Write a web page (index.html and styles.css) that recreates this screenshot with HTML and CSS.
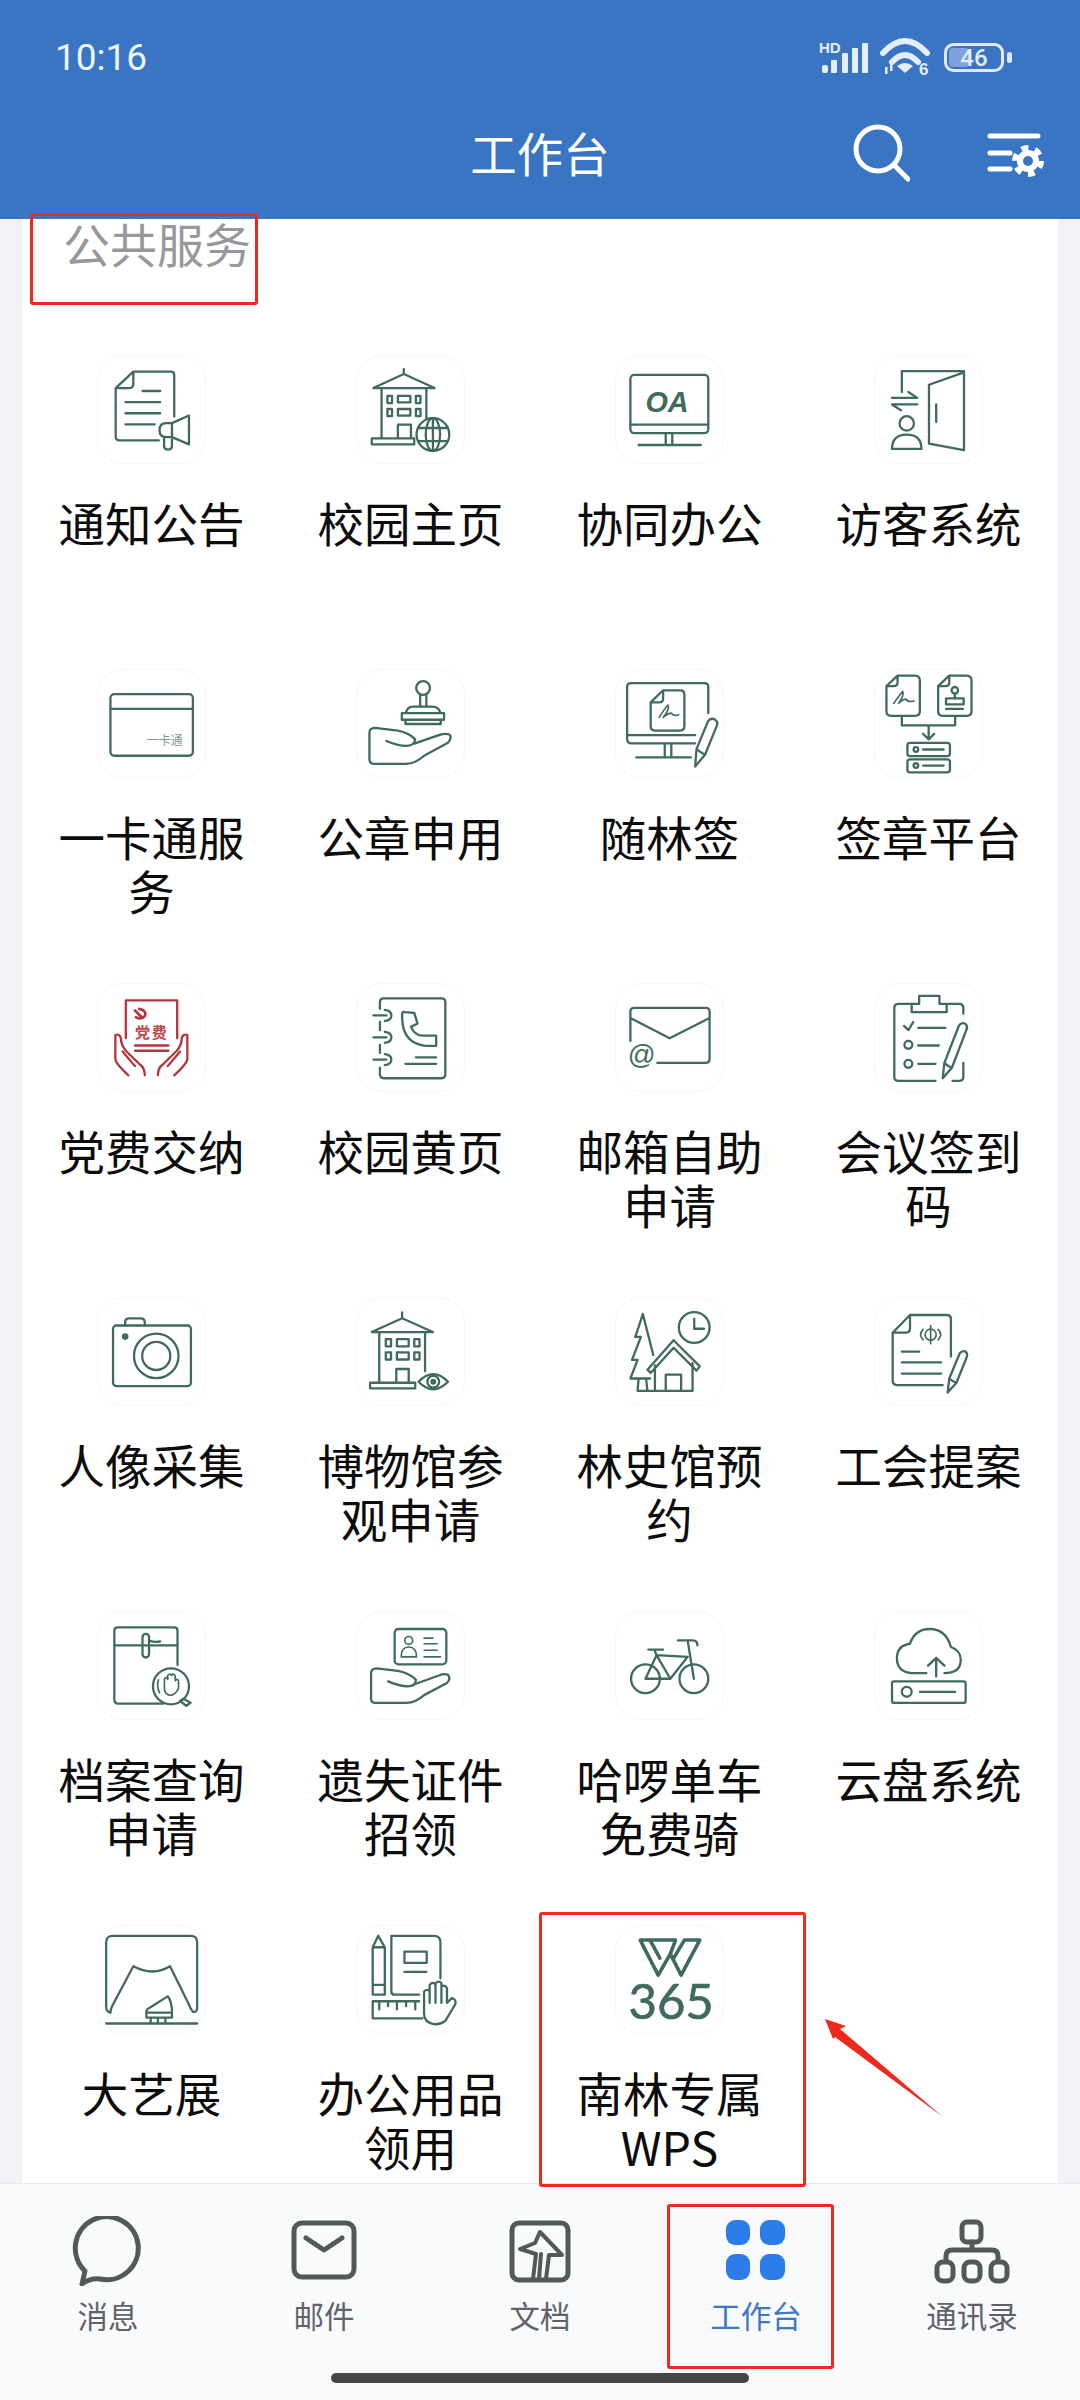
FILE: index.html
```html
<!DOCTYPE html>
<html lang="zh-CN">
<head>
<meta charset="utf-8">
<title>工作台</title>
<link rel="stylesheet" href="styles.css">
</head>
<body>
<div class="page">
  <header class="top">
    <div class="status">
      <span class="time">10:16</span>
      <svg class="status-icons" width="200" height="45" viewBox="0 0 200 45">
        <text class="hd" x="4" y="18">HD</text>
        <g class="st-fill">
          <rect x="7" y="30" width="6" height="8" rx="2"/><rect x="16" y="25" width="6" height="13" rx="1"/><rect x="27" y="18" width="6" height="20" rx="1"/><rect x="37" y="13" width="6" height="25" rx="1"/><rect x="47" y="8" width="6" height="30" rx="1"/>
          <path d="M90 38 L82 31 Q90 25 98 31 Z"/>
          <rect x="70" y="32" width="2.500" height="7"/><rect x="75" y="29" width="2.500" height="7"/>
        </g>
        <path class="st-line" d="M68 18 Q90 -6 112 18 M77 27 Q90 13 103 27"/>
        <text class="six" x="104" y="40">6</text>
        <rect class="st-bat" x="130.500" y="9.500" width="57" height="26" rx="8"/>
        <rect class="st-level" x="134" y="13" width="20" height="19" rx="4"/>
        <rect class="st-cap" x="192" y="17" width="5" height="11" rx="2.500"/>
        <text class="bat-num" x="159" y="31">46</text>
      </svg>
    </div>
    <div class="appbar">
      <div></div>
      <h1 class="title">工作台</h1>
      <div class="actions">
        <svg class="act" width="60" height="60" viewBox="0 0 60 60"><circle cx="28" cy="26" r="22"/><path d="M44 42 L58 56"/></svg>
        <svg class="act" width="60" height="60" viewBox="0 0 60 60"><path d="M5 13 H53 M5 30 H25 M5 46 H25"/><circle cx="43" cy="38" r="8" class="thin"/><circle cx="43" cy="38" r="13" class="teeth"/></svg>
      </div>
    </div>
  </header>

  <main class="main">
    <section class="card">
      <h2 class="section-title">公共服务</h2>
      <div class="grid">

        <a class="item"><span class="box"><svg class="ic" viewBox="22 30 327 327"><path d="M130 78 H245 Q255 78 255 88 V215 M208 288 H88 Q76 288 76 276 V128 L130 78 V115 Q130 128 118 128 H76 M158 137 H212 M106 171 H212 M106 205 H212 M106 239 H195"/><path d="M300 212 L248 235 H230 Q210 235 210 257 Q210 278 230 278 H248 L300 300 Z M248 235 V278 M224 280 V305 Q224 316 236 316 Q248 316 248 305 V285"/></svg></span><span class="label">通知公告</span></a>

        <a class="item"><span class="box"><svg class="ic" viewBox="800 30 327 327"><path d="M943 70 V85 M850 128 L943 85 L1037 128 Z M875 128 V282 M1012 128 V220 M845 282 H975 V300 H845 Z M925 282 V240 H965 V282"/><rect x="893" y="152" width="14" height="22"/><rect x="925" y="152" width="38" height="20"/><rect x="980" y="152" width="14" height="22"/><rect x="893" y="192" width="14" height="22"/><rect x="925" y="192" width="38" height="20"/><rect x="980" y="192" width="14" height="22"/><circle cx="1032" cy="270" r="50"/><ellipse cx="1032" cy="270" rx="22" ry="50"/><path d="M1032 220 V320 M987 250 H1077 M987 290 H1077"/></svg></span><span class="label">校园主页</span></a>

        <a class="item"><span class="box"><svg class="ic" viewBox="16 30 327 327"><rect x="60" y="88" width="238" height="178" rx="12"/><path d="M60 240 H298 M168 266 V302 M188 266 V302 M85 302 H275"/><text class="t oa" x="106" y="202">OA</text></svg></span><span class="label">协同办公</span></a>

        <a class="item"><span class="box"><svg class="ic" viewBox="793 30 327 327"><path d="M875 140 V76 H1065 V318 L958 298 V118 L1065 80 M980 178 V232 M845 158 H922 L895 140 M922 178 H845 L872 196"/><circle cx="890" cy="236" r="22"/><path d="M845 314 Q845 270 890 270 Q935 270 935 314 Z"/></svg></span><span class="label">访客系统</span></a>

        <a class="item"><span class="box"><svg class="ic" viewBox="22 973 327 327"><rect x="60" y="1047" width="252" height="188" rx="12"/><path d="M60 1092 H312"/><text class="t card-t" x="170" y="1202">一卡通</text></svg></span><span class="label">一卡通服务</span></a>

        <a class="item"><span class="box"><svg class="ic" viewBox="800 973 327 327"><circle cx="1002" cy="1028" r="21"/><path d="M993 1050 V1085 M1012 1050 V1085 M950 1105 Q952 1085 972 1085 H1030 Q1052 1085 1054 1105 M937 1105 H1066 V1125 H937 Z M948 1125 V1138 H1056 V1125"/><path d="M890 1190 Q925 1205 950 1205 Q975 1205 978 1185 Q960 1165 925 1158 L855 1150 Q838 1150 838 1165 V1245 Q838 1260 852 1260 H950 Q980 1258 1005 1235 L1078 1195 Q1092 1180 1082 1170 Q1072 1165 1050 1172 L975 1198"/></svg></span><span class="label">公章申用</span></a>

        <a class="item"><span class="box"><svg class="ic" viewBox="16 973 327 327"><path d="M298 1105 V1025 Q298 1013 286 1013 H62 Q50 1013 50 1025 V1185 Q50 1197 62 1197 H258 M50 1172 H258 M165 1197 V1240 M185 1197 V1240 M78 1240 H245"/><path d="M160 1035 H212 Q225 1035 225 1048 V1145 Q225 1158 212 1158 H135 Q122 1158 122 1145 V1072 Z M160 1035 V1060 Q160 1072 148 1072 H122"/><path class="thin" d="M148 1118 Q165 1090 175 1080 Q180 1095 160 1118 Q175 1105 185 1105 Q190 1115 208 1110"/><path d="M258 1268 L262 1215 L297 1130 Q305 1118 318 1124 Q330 1132 323 1146 L288 1232 Z M262 1215 Q275 1225 288 1232"/></svg></span><span class="label">随林签</span></a>

        <a class="item"><span class="box"><svg class="ic" viewBox="793 973 327 327"><path d="M862 990 H915 Q930 990 930 1005 V1100 Q930 1113 915 1113 H842 Q828 1113 828 1100 V1022 Z M862 990 V1012 Q862 1022 850 1022 H828"/><path d="M1020 990 H1073 Q1088 990 1088 1005 V1100 Q1088 1113 1073 1113 H1000 Q986 1113 986 1100 V1022 Z M1020 990 V1012 Q1020 1022 1008 1022 H986"/><path class="thin" d="M850 1075 Q868 1050 878 1038 Q882 1052 865 1075 Q878 1062 888 1062 Q892 1072 912 1068"/><circle cx="1037" cy="1035" r="10"/><path d="M1037 1045 V1060"/><rect x="1010" y="1060" width="54" height="18"/><path d="M1010 1092 H1062 M875 1115 V1142 H1038 V1115 M957 1142 V1185 M940 1168 L957 1185 L974 1168"/><rect x="892" y="1196" width="130" height="40" rx="8"/><rect x="892" y="1246" width="130" height="40" rx="8"/><circle cx="918" cy="1216" r="7"/><circle cx="918" cy="1265" r="7"/><path d="M940 1216 H1003 M940 1265 H1003"/></svg></span><span class="label">签章平台</span></a>

        <a class="item"><span class="box"><svg class="ic red" viewBox="22 24 327 327"><path d="M107 190 V74 H264 V190 M135 212 H237 M135 228 H237"/><path d="M165 303 Q165 280 150 270 L107 228 Q92 210 92 190 Q88 175 75 180 V255 Q78 270 115 303 M97 230 L135 275"/><path d="M205 303 Q205 280 220 270 L263 228 Q278 210 278 190 Q282 175 295 180 V255 Q292 270 255 303 M273 230 L235 275"/><path class="emblem" d="M148 100 Q172 105 165 122 Q155 135 138 125 M135 105 L155 125"/><text class="t party" x="135" y="188">党费</text></svg></span><span class="label">党费交纳</span></a>

        <a class="item"><span class="box"><svg class="ic" viewBox="800 24 327 327"><path d="M870 100 V80 Q870 68 882 68 H1058 Q1070 68 1070 80 V300 Q1070 312 1058 312 H882 Q870 312 870 300 V280 M870 140 V165 M870 210 V235 M850 120 H890 M885 103 Q905 105 905 120 Q905 135 885 137 M850 187 H890 M885 170 Q905 172 905 187 Q905 202 885 204 M850 255 H890 M885 238 Q905 240 905 255 Q905 270 885 272 M980 248 H1042 M948 268 H1042"/><path d="M938 115 Q938 108 945 110 L975 112 L985 145 L965 155 Q975 180 1000 182 H1042 V213 H1010 Q940 205 938 130 Z"/></svg></span><span class="label">校园黄页</span></a>

        <a class="item"><span class="box"><svg class="ic" viewBox="16 24 327 327"><path d="M60 198 V108 Q60 97 72 97 H290 Q302 97 302 108 V253 Q302 265 290 265 H142 M60 128 L180 190 L302 128"/><text class="t at" x="52" y="270">@</text></svg></span><span class="label">邮箱自助申请</span></a>

        <a class="item"><span class="box"><svg class="ic" viewBox="793 24 327 327"><path d="M905 85 H865 Q852 85 852 98 V308 Q852 320 865 320 H978 M1012 85 H1050 Q1063 85 1063 98 V115 M1063 265 V308 Q1063 320 1050 320 H1030 M905 110 V85 H928 V60 H990 V85 H1012 V110 Z M882 152 L895 165 L910 140 M925 158 H1008 M925 212 H988 M925 268 H978"/><circle cx="895" cy="210" r="12"/><circle cx="895" cy="268" r="12"/><path d="M1000 312 L1005 265 L1050 150 Q1058 140 1070 146 Q1078 155 1072 165 L1028 280 Z M1005 265 Q1015 275 1028 280"/></svg></span><span class="label">会议签到码</span></a>

        <a class="item"><span class="box"><svg class="ic" viewBox="22 966 327 327"><rect x="68" y="1050" width="238" height="185" rx="10"/><path d="M105 1050 V1040 Q105 1028 117 1028 H152 Q165 1028 165 1040 V1050"/><circle class="f" cx="105" cy="1084" r="10"/><circle cx="200" cy="1143" r="68"/><circle cx="200" cy="1143" r="43"/></svg></span><span class="label">人像采集</span></a>

        <a class="item"><span class="box"><svg class="ic" viewBox="800 966 327 327"><path d="M938 1010 V1026 M845 1070 L938 1028 L1032 1070 Z M868 1070 V1225 M1008 1070 V1190 M840 1225 H978 V1242 H840 Z M920 1225 V1183 H958 V1225"/><rect x="888" y="1092" width="16" height="22"/><rect x="922" y="1092" width="36" height="22"/><rect x="975" y="1092" width="16" height="22"/><rect x="888" y="1132" width="16" height="22"/><rect x="922" y="1132" width="36" height="22"/><rect x="975" y="1132" width="16" height="22"/><path d="M988 1222 Q1033 1175 1078 1222 Q1033 1268 988 1222 Z"/><circle cx="1033" cy="1222" r="18"/><circle class="f" cx="1033" cy="1222" r="9"/></svg></span><span class="label">博物馆参观申请</span></a>

        <a class="item"><span class="box"><svg class="ic" viewBox="16 966 327 327"><circle cx="255" cy="1056" r="47"/><path d="M255 1030 V1060 H285 M98 1015 L75 1085 H92 L65 1155 H82 L60 1212 H120 M98 1015 L130 1140 M85 1212 L82 1250 H250 V1165 M112 1250 L108 1212 M112 1185 L192 1095 L272 1175 L262 1188 L192 1118 L122 1195 Z M135 1172 V1250 M168 1250 V1200 H215 V1250"/></svg></span><span class="label">林史馆预约</span></a>

        <a class="item"><span class="box"><svg class="ic" viewBox="793 966 327 327"><path d="M900 1018 H1012 Q1025 1018 1025 1030 V1145 M1000 1232 H860 Q847 1232 847 1220 V1072 L900 1018 V1058 Q900 1072 888 1072 H847 M875 1130 H928 M875 1163 H995 M875 1197 H995"/><circle class="thin" cx="963" cy="1078" r="17"/><path class="thin" d="M963 1050 V1106 M940 1062 Q925 1078 940 1094 M986 1062 Q1001 1078 986 1094"/><path d="M1015 1255 L1020 1212 L1052 1135 Q1060 1125 1070 1130 Q1078 1138 1072 1150 L1042 1225 Z M1020 1212 Q1030 1222 1042 1225"/></svg></span><span class="label">工会提案</span></a>

        <a class="item"><span class="box"><svg class="ic" viewBox="22 18 327 327"><path d="M265 180 V75 Q265 65 255 65 H82 Q72 65 72 75 V285 Q72 298 82 298 H222 M72 120 H265 M178 105 Q195 112 212 108"/><rect x="158" y="85" width="20" height="72" rx="10"/><circle cx="245" cy="245" r="55"/><path d="M283 283 L305 295 L292 305 L273 290 Z"/><path class="thin" d="M225 250 V222 Q232 214 235 224 V212 Q242 204 247 212 V210 Q254 204 258 214 V228 Q264 220 268 228 V252 Q255 275 240 272 Q225 268 225 250 Z M207 225 Q200 245 210 265"/></svg></span><span class="label">档案查询申请</span></a>

        <a class="item"><span class="box"><svg class="ic" viewBox="800 18 327 327"><rect x="915" y="70" width="158" height="108" rx="12"/><circle class="thin" cx="958" cy="105" r="12"/><path class="thin" d="M935 155 Q935 125 958 125 Q982 125 982 155 Z M1005 98 H1032 M1005 115 H1045 M1005 135 H1045 M1005 155 H1055"/><path d="M895 230 Q930 245 955 245 Q980 245 980 225 Q960 205 925 198 L860 190 Q843 190 843 205 V282 Q843 296 857 296 H950 Q980 295 1005 272 L1075 235 Q1088 222 1078 210 Q1068 205 1050 212 L978 238"/></svg></span><span class="label">遗失证件招领</span></a>

        <a class="item"><span class="box"><svg class="ic" viewBox="16 18 327 327"><circle cx="106" cy="222" r="44"/><circle cx="254" cy="222" r="44"/><path d="M106 222 L140 150 L235 155 L182 222 H106 M140 150 L182 222 M235 105 L254 222 M205 105 H250 Q265 105 265 120 M115 133 H160 M133 133 L140 150"/></svg></span><span class="label">哈啰单车免费骑</span></a>

        <a class="item"><span class="box"><svg class="ic" viewBox="793 18 327 327"><path d="M950 205 H905 Q860 200 860 160 Q860 120 900 115 Q915 70 960 70 Q1010 70 1025 125 Q1055 135 1055 165 Q1055 205 1005 205 M980 215 V160 M955 182 L980 158 L1005 182"/><rect x="845" y="230" width="225" height="66" rx="6"/><circle cx="890" cy="262" r="15"/><path d="M930 262 H1038"/></svg></span><span class="label">云盘系统</span></a>

        <a class="item"><span class="box"><svg class="ic" viewBox="22 960 327 327"><path d="M60 1225 Q48 1222 47 1210 V1010 Q47 990 67 990 H305 Q325 990 325 1010 V1210 Q325 1225 312 1222 Q305 1215 300 1200 L242 1083 Q190 1115 130 1083 L65 1205 Q60 1218 60 1225 M47 1258 H325 M170 1240 V1225 Q168 1215 180 1210 L235 1175 Q245 1185 248 1215 V1240 H170 M170 1225 H248 M183 1240 V1255 M205 1240 V1255 M228 1240 V1255"/></svg></span><span class="label">大艺展</span></a>

        <a class="item"><span class="box"><svg class="ic" viewBox="800 960 327 327"><path d="M865 990 L885 1025 V1170 H848 V1025 Z M848 1025 H885 M848 1140 H885 M905 990 V1160 Q905 1170 915 1170 H990 M905 990 H1035 Q1055 990 1055 1010 V1120 M945 1100 H1012 M990 1190 H848 V1242 H1000 M868 1190 V1215 M895 1190 V1205 M922 1190 V1215 M950 1190 V1205 M978 1190 V1215"/><rect x="945" y="1038" width="68" height="35"/><path d="M1005 1230 V1160 Q1015 1150 1022 1160 V1140 Q1032 1128 1040 1140 V1135 Q1050 1125 1058 1135 V1145 Q1068 1138 1075 1150 V1195 L1090 1180 Q1105 1185 1100 1200 L1070 1250 Q1055 1262 1035 1260 Q1005 1255 1005 1230 Z M1022 1160 V1195 M1040 1140 V1195 M1058 1135 V1195"/></svg></span><span class="label">办公用品领用</span></a>

        <a class="item"><span class="box"><svg class="ic bold" viewBox="16 960 327 327"><path d="M90 1003 H198 M90 1003 L145 1110 L182 1045 L215 1110 L272 1003 H225 L190 1062 M120 1003 L150 1058 M198 1003 L182 1045"/><text class="t num" x="54" y="1245">365</text></svg></span><span class="label">南林专属 WPS</span></a>

      </div>
    </section>
  </main>

  <nav class="tabs">
    <div class="tab-row">
      <a class="tab"><svg class="tab-ic" viewBox="0 0 80 70"><path d="M14 68 L17 55 A31.500 31.500 0 1 1 32 63 Q22 62 14 68 Z"/></svg><span class="tab-label">消息</span></a>
      <a class="tab"><svg class="tab-ic" viewBox="0 0 80 70"><rect x="10" y="7" width="60" height="54" rx="8"/><path d="M22 22 L40 34 L58 22"/></svg><span class="tab-label">邮件</span></a>
      <a class="tab"><svg class="tab-ic" viewBox="0 0 80 70"><rect x="12" y="7" width="56" height="57" rx="7"/><path class="narrow" d="M46 63 L49 39 H62 L40 16 L35 27 L20 33 L36 38 L33 63 M41 38 L39 63"/></svg><span class="tab-label">文档</span></a>
      <a class="tab tab-on"><svg class="tab-ic apps" viewBox="0 0 80 70"><rect x="10" y="4" width="24" height="25" rx="9"/><rect x="44" y="4" width="25" height="25" rx="9"/><rect x="10" y="38" width="24" height="26" rx="9"/><rect x="44" y="38" width="25" height="26" rx="9"/></svg><span class="tab-label">工作台</span></a>
      <a class="tab"><svg class="tab-ic" viewBox="0 0 80 70"><rect x="30" y="6" width="19" height="20" rx="5"/><path d="M40 26 V34 M14 45 V40 Q14 34 20 34 H60 Q66 34 66 40 V45"/><rect x="5" y="46" width="16" height="19" rx="6"/><rect x="32" y="46" width="16" height="19" rx="6"/><rect x="59" y="46" width="16" height="19" rx="6"/></svg><span class="tab-label">通讯录</span></a>
    </div>
    <div class="home-bar"></div>
  </nav>

  <div class="mark mark-title"></div>
  <div class="mark mark-wps"></div>
  <div class="mark mark-tab"></div>
  <svg class="mark-arrow" width="130" height="110" viewBox="0 0 130 110"><polygon points="5,5 26,12 20,15 123,103 15,23 13,25"/></svg>
</div>
</body>
</html>
```

FILE: styles.css
```css
* { box-sizing: border-box; }
html, body { margin: 0; padding: 0; }
body { font-family: "Noto Sans CJK SC", "Noto Sans", sans-serif; }

.page {
  position: relative;
  width: 1080px;
  height: 2400px;
  display: flex;
  flex-direction: column;
  overflow: hidden;
  background: #f0f2f5;
}

.top { background: #3a75c4; color: #fff; height: 219px; flex: none; }

.status {
  height: 100px;
  padding: 36px 65px 0 55px;
  display: flex;
  justify-content: space-between;
  align-items: flex-start;
}
.time {
  font-family: Roboto, "Liberation Sans", sans-serif;
  font-size: 37px;
  line-height: 44px;
  color: #eef4fd;
}
.status-icons { display: block; margin-top: -1px; }
.hd { font: 700 15px "Liberation Sans", sans-serif; fill: #e4edfb; }
.six { font: 700 17px "Liberation Sans", sans-serif; fill: #e4edfb; }
.bat-num { font: 500 24px Roboto, sans-serif; fill: #e4edfb; text-anchor: middle; }
.st-fill { fill: #e4edfb; }
.st-line { fill: none; stroke: #e4edfb; stroke-width: 6; stroke-linecap: round; }
.st-bat { fill: none; stroke: #dfe9fa; stroke-width: 3; }
.st-level { fill: #7ea3dc; }
.st-cap { fill: #dfe9fa; }

.appbar {
  height: 106px;
  display: grid;
  grid-template-columns: 1fr auto 1fr;
  align-items: center;
}
.title {
  margin: 0;
  padding-bottom: 3px;
  font-size: 46.500px;
  line-height: 60px;
  font-weight: 400;
  color: #fff;
}
.actions {
  display: flex;
  justify-content: flex-end;
  gap: 75px;
  padding-right: 35px;
}
.act {
  display: block;
  fill: none;
  stroke: #fff;
  stroke-width: 5;
  stroke-linecap: round;
}
.act .thin { stroke-width: 6; }
.act .teeth { stroke-width: 6; stroke-dasharray: 6.800 6.800; stroke-linecap: butt; }

.main { flex: 1; min-height: 0; padding: 0 22px; }
.card { background: #fff; min-height: 100%; }

.section-title {
  margin: 0 0 88px;
  padding-left: 41px;
  font-size: 47px;
  line-height: 48px;
  font-weight: 400;
  color: #98989c;
}

.grid {
  display: grid;
  grid-template-columns: repeat(4, 259px);
  grid-auto-rows: 314px;
}
.item {
  display: flex;
  flex-direction: column;
  align-items: center;
  padding: 0 30px;
  text-align: center;
  color: #0c0c0c;
}
.box {
  flex: none;
  width: 109px;
  height: 109px;
  border: 1px solid #f7f7f7;
  border-radius: 26px;
  background: #fff;
  margin-bottom: 31px;
}
.label { font-size: 46.500px; line-height: 54px; width: 199px; }

.ic {
  display: block;
  width: 107px;
  height: 107px;
  fill: none;
  stroke: #3f6b58;
  stroke-width: 7;
  stroke-linecap: round;
  stroke-linejoin: round;
}
.ic.red { stroke: #b3343b; }
.ic.bold { stroke-width: 11; }
.ic .thin { stroke-width: 5; }
.ic .emblem { stroke-width: 8; }
.ic .f { fill: #3f6b58; stroke: none; }
.t { stroke: none; fill: #3f6b58; }
.oa { font: italic 700 88px "Liberation Sans", sans-serif; }
.card-t { font: 400 37px "Noto Sans CJK SC", sans-serif; fill: #7c9a8d; }
.party { font: 700 46px "Noto Sans CJK SC", sans-serif; fill: #c0444a; letter-spacing: 5px; }
.at { font: 400 84px "Liberation Sans", sans-serif; fill: #3f6b58; }
.num { font: 400 150px Lato, sans-serif; fill: #3f6b58; stroke: #3f6b58; stroke-width: 2; }

.tabs {
  position: relative;
  z-index: 1;
  flex: none;
  height: 217px;
  padding-top: 32px;
  background: #f9fafc;
  border-top: 1px solid #e9e9ed;
}
.tab-row { display: grid; grid-template-columns: repeat(5, 1fr); }
.tab {
  display: flex;
  flex-direction: column;
  align-items: center;
  gap: 9px;
  color: #5f6368;
}
.tab-ic {
  display: block;
  width: 80px;
  height: 70px;
  fill: none;
  stroke: #555859;
  stroke-width: 5;
  stroke-linejoin: round;
  stroke-linecap: round;
}
.tab-ic .narrow { stroke-width: 4; }
.tab-ic.apps { fill: #2b7de9; stroke: none; }
.tab-label { font-size: 30.500px; line-height: 40px; }
.tab-on { color: #3a78c8; }

.home-bar {
  width: 418px;
  height: 10px;
  margin: 38px auto 0;
  border-radius: 5px;
  background: #444648;
}

.mark {
  position: absolute;
  z-index: 2;
  border: 3px solid #f0281e;
  border-radius: 3px;
}
.mark-title { left: 30px; top: 213px; width: 228px; height: 92px; }
.mark-wps { left: 539px; top: 1912px; width: 267px; height: 275px; }
.mark-tab { left: 667px; top: 2204px; width: 167px; height: 165px; }
.mark-arrow { position: absolute; z-index: 2; left: 820px; top: 2014px; fill: #f0281e; }
```
